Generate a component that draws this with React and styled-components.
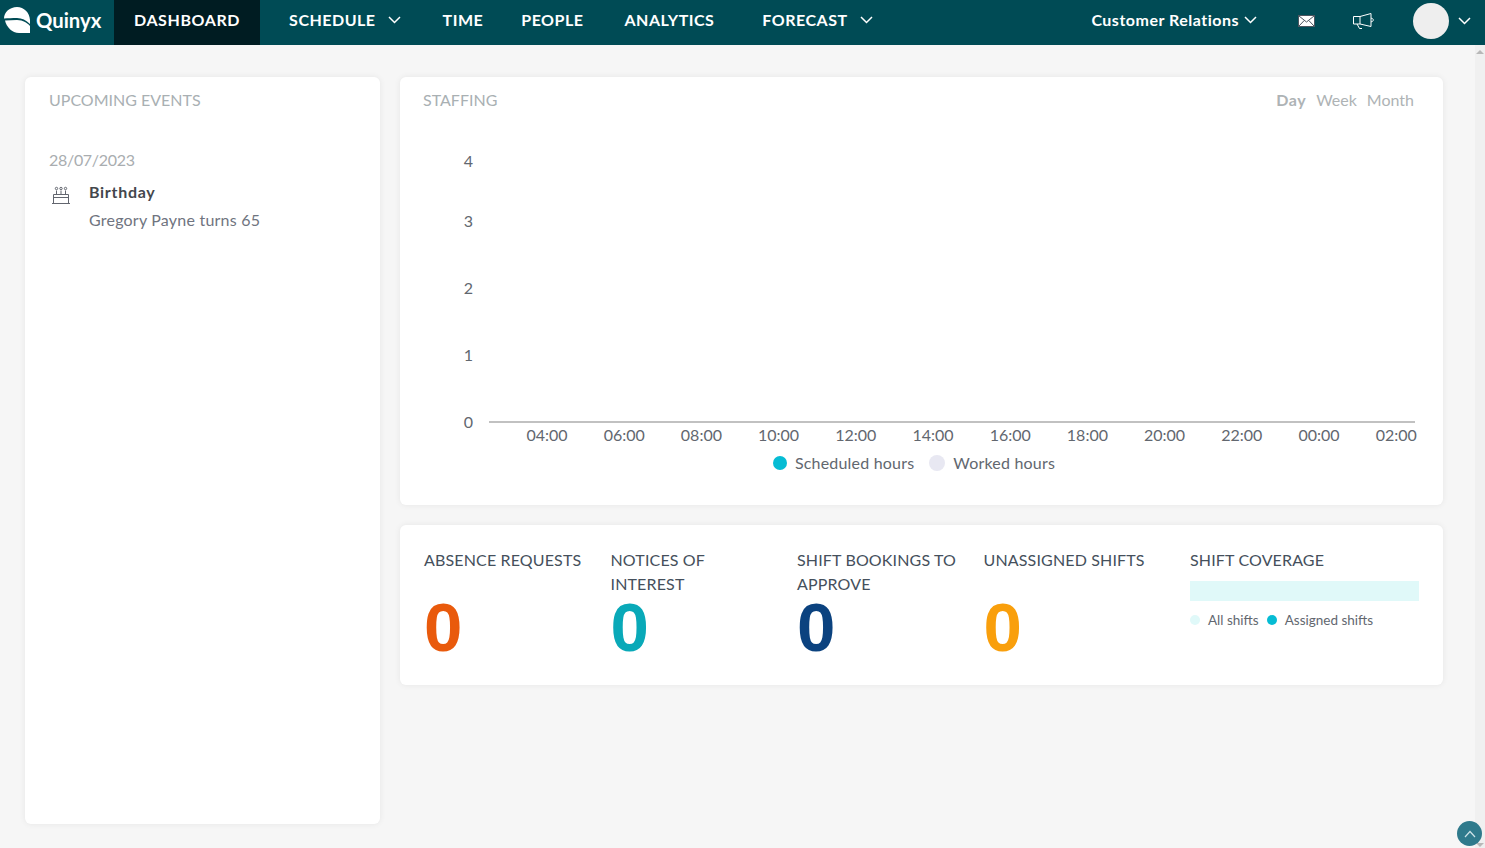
import React from "react";
import styled, { createGlobalStyle } from "styled-components";

const FONT = `Lato, "Noto Sans", "Liberation Sans", sans-serif`;

const GlobalStyle = createGlobalStyle`
  html, body {
    margin: 0;
    height: 100%;
    overflow: hidden;
    background: #f6f6f6;
    font-family: ${FONT};
  }
`;

const Page = styled.div`
  width: 1485px;
  height: 848px;
  display: flex;
  flex-direction: column;
  overflow: hidden;
`;

const TopBar = styled.header`
  height: 45px;
  flex: none;
  display: flex;
  align-items: center;
  background: #004b55;
  color: #fff;
`;

const Brand = styled.div`
  width: 114px;
  flex: none;
  height: 100%;
  display: flex;
  align-items: center;
  gap: 5px;
  padding: 0 0 5px 4px;
  box-sizing: border-box;
  font-size: 20.3px;
  font-weight: 700;
`;

const NavItem = styled.a`
  height: 100%;
  box-sizing: border-box;
  display: flex;
  align-items: center;
  gap: ${(p) => p.$gap || 12}px;
  margin-left: ${(p) => p.$left || 0}px;
  padding: ${(p) => (p.$active ? "0 20px 6px" : "0 0 6px")};
  background: ${(p) => (p.$active ? "#001c22" : "transparent")};
  font-size: 16px;
  font-weight: 700;
  letter-spacing: ${(p) => (p.$active ? "0.6px" : "0.5px")};
  white-space: nowrap;
`;

const Chevron = () => (
  <svg width="13" height="8" viewBox="0 0 13 8" fill="none" stroke="#fff" strokeWidth="1.5">
    <path d="M1 1L6.5 6.5L12 1" />
  </svg>
);

const RightNav = styled.div`
  margin-left: auto;
  height: 100%;
  display: flex;
  align-items: center;
`;

const IconSlot = styled.span`
  display: flex;
  margin: 0 0 3px ${(p) => p.$left}px;
`;

const Avatar = styled.span`
  width: 36px;
  height: 36px;
  border-radius: 50%;
  background: #eeeeee;
  margin: 0 0 3px 39px;
`;

const Body = styled.div`
  flex: 1;
  display: flex;
  min-height: 0;
`;

const Content = styled.main`
  flex: 1;
  display: grid;
  grid-template-columns: 355px 1043px;
  column-gap: 20px;
  align-items: start;
  padding: 32px 0 0 25px;
`;

const Card = styled.section`
  background: #fff;
  border-radius: 6px;
  box-shadow: 0 0 6px rgba(0, 0, 0, 0.07);
  box-sizing: border-box;
`;

const EventsCard = styled(Card)`
  height: 747px;
  padding: 13px 24px;
`;

const Column = styled.div`
  display: flex;
  flex-direction: column;
  gap: 20px;
`;

const CardTitle = styled.h2`
  margin: 0;
  font-size: 16px;
  line-height: 20px;
  font-weight: 400;
  color: #a9b0b3;
`;

const DateLabel = styled.div`
  margin-top: 40px;
  font-size: 16px;
  line-height: 20px;
  letter-spacing: -0.3px;
  color: #a9adb0;
`;

const EventRow = styled.div`
  margin-top: 12px;
  display: flex;
  gap: 19px;
`;

const EventIcon = styled.span`
  width: 21px;
  padding: 4px 0 0 2px;
  box-sizing: border-box;
  display: flex;
  justify-content: center;
  flex: none;
`;

const EventName = styled.div`
  font-size: 16px;
  line-height: 20px;
  font-weight: 700;
  letter-spacing: 0.7px;
  color: #44474d;
`;

const EventText = styled.div`
  margin-top: 8px;
  font-size: 16px;
  line-height: 20px;
  letter-spacing: 0.22px;
  color: #6f7480;
`;

const StaffingCard = styled(Card)`
  height: 428px;
  padding: 13px 29px 0 23px;
`;

const CardHead = styled.div`
  display: flex;
  justify-content: space-between;
`;

const RangeTabs = styled.div`
  display: flex;
  gap: 10px;
`;

const RangeTab = styled.span`
  font-size: 16px;
  line-height: 20px;
  color: #aeb3b5;
  font-weight: ${(p) => (p.$active ? 700 : 400)};
  letter-spacing: ${(p) => (p.$active ? "0.5px" : "0")};
`;

const ChartFrame = styled.svg`
  display: block;
  margin: 0 0 0 -23px;
  font-family: ${FONT};
`;

const Legend = styled.div`
  display: flex;
  justify-content: center;
  align-items: center;
  gap: 15px;
  padding-right: 9px;
`;

const LegendEntry = styled.span`
  display: flex;
  align-items: center;
  gap: ${(p) => p.$gap || 8}px;
  font-size: ${(p) => p.$size || 16}px;
  line-height: 20px;
  letter-spacing: ${(p) => (p.$size ? 0 : "0.2px")};
  color: #62676f;
`;

const Dot = styled.i`
  width: ${(p) => p.$size}px;
  height: ${(p) => p.$size}px;
  border-radius: 50%;
  background: ${(p) => p.$color};
`;

const StatsCard = styled(Card)`
  height: 160px;
  padding: 23px 24px 0;
  display: grid;
  grid-template-columns: 186.5px 186.5px 186.5px 206.5px 1fr;
`;

const StatTitle = styled.div`
  height: ${(p) => (p.$short ? 25 : 50)}px;
  font-size: 16px;
  line-height: 24px;
  letter-spacing: 0.15px;
  color: #45505c;
  padding-right: 22px;
`;

const StatValue = styled.div`
  font-family: "Liberation Sans", Arial, sans-serif;
  font-size: 69px;
  line-height: 60px;
  font-weight: 700;
  color: ${(p) => p.$color};
`;

const CoverageBar = styled.div`
  height: 20px;
  margin-top: 8px;
  background: #e0f9f9;
`;

const CoverageLegend = styled.div`
  margin-top: 9px;
  display: flex;
  gap: 8px;
`;

const Track = styled.div`
  width: 10px;
  flex: none;
  background: #f0f0f0;
  display: flex;
  flex-direction: column;
  align-items: center;
  justify-content: space-between;
  padding: 5px 0 1px;
  box-sizing: border-box;
`;

const TrackArrow = styled.span`
  width: 0;
  height: 0;
  border-left: 4px solid transparent;
  border-right: 4px solid transparent;
  border-top: ${(p) => (p.$down ? "4px solid #b8b8b8" : "0")};
  border-bottom: ${(p) => (p.$down ? "0" : "4px solid #b8b8b8")};
`;

const ScrollTop = styled.button`
  position: fixed;
  right: 3px;
  bottom: 2px;
  width: 25px;
  height: 25px;
  padding: 0;
  border: 0;
  border-radius: 50%;
  background: #2f7a8c;
  display: flex;
  align-items: center;
  justify-content: center;
`;

const Logo = () => (
  <svg width="27" height="27" viewBox="0 0 27 27" fill="#fff">
    <path d="M0 11.5C0 5 6 0 13 0C20 0 25.5 5.5 26 13L26 17C22 13 18 11 13 11C8 11 4 11.2 0 11.5Z" />
    <path d="M1 13.5C5 13.2 9 13 13 13C19 13 24 16.5 26 19L26 26L15 26C8 26 2.5 20 1 13.5Z" />
  </svg>
);

const MailIcon = () => (
  <svg width="17" height="12" viewBox="0 0 17 12">
    <rect x="0.5" y="0.5" width="16" height="11" fill="#fff" stroke="#4c5660" />
    <path d="M1 1L8.5 7L16 1M1 11L6.2 5.5M16 11L10.8 5.5" fill="none" stroke="#4c5660" />
  </svg>
);

const MegaphoneIcon = () => (
  <svg width="21" height="17" viewBox="0 0 21 17" fill="none" stroke="#fff" strokeWidth="1">
    <path d="M7 3.5H0.5V11H7Z" />
    <path d="M7 3.5L18 0.5V13.5L7 11" />
    <path d="M18 5.2C19.3 5.2 20.3 6 20.3 7C20.3 8 19.3 8.8 18 8.8" />
    <path d="M4 11L6.5 15.5H9" />
  </svg>
);

const CakeIcon = () => (
  <svg width="18" height="18" viewBox="0 0 18 18" fill="none" stroke="#62666f" strokeWidth="1">
    <path d="M0 17.5H18M1.5 17.5V8.5H16.5V17.5M1.5 11.5H16.5" />
    <path d="M4.5 8.5V4.5M9 8.5V4.5M13.5 8.5V4.5" />
    <circle cx="4.5" cy="2.5" r="1.2" />
    <circle cx="9" cy="2.5" r="1.2" />
    <circle cx="13.5" cy="2.5" r="1.2" />
  </svg>
);

const yTicks = [
  ["4", 51],
  ["3", 111],
  ["2", 178],
  ["1", 245],
  ["0", 312],
];

const xTicks = ["04:00", "06:00", "08:00", "10:00", "12:00", "14:00", "16:00", "18:00", "20:00", "22:00", "00:00", "02:00"];

const StaffingChart = () => (
  <ChartFrame width="1020" height="343" viewBox="0 0 1020 343">
    {yTicks.map(([label, y]) => (
      <text key={label} x="73" y={y + 6} textAnchor="end" fontSize="16" fill="#62676f">
        {label}
      </text>
    ))}
    <line x1="89" x2="1015" y1="312" y2="312" stroke="#acacac" strokeWidth="1.5" />
    {xTicks.map((label, i) => (
      <text key={label} x={147 + i * 77.2} y="331" textAnchor="middle" fontSize="16" fill="#62676f">
        {label}
      </text>
    ))}
  </ChartFrame>
);

const stats = [
  { title: "ABSENCE REQUESTS", color: "#e95a0c" },
  { title: "NOTICES OF INTEREST", color: "#09a9b8" },
  { title: "SHIFT BOOKINGS TO APPROVE", color: "#0b427f" },
  { title: "UNASSIGNED SHIFTS", color: "#f99f0c" },
];

export default function App() {
  return (
    <Page>
      <GlobalStyle />
      <TopBar>
        <Brand>
          <Logo />
          Quinyx
        </Brand>
        <NavItem $active>DASHBOARD</NavItem>
        <NavItem $left={29}>
          SCHEDULE <Chevron />
        </NavItem>
        <NavItem $left={42}>TIME</NavItem>
        <NavItem $left={38}>PEOPLE</NavItem>
        <NavItem $left={41}>ANALYTICS</NavItem>
        <NavItem $left={48}>
          FORECAST <Chevron />
        </NavItem>
        <RightNav>
          <NavItem $gap={5}>
            Customer Relations <Chevron />
          </NavItem>
          <IconSlot $left={41}>
            <MailIcon />
          </IconSlot>
          <IconSlot $left={38}>
            <MegaphoneIcon />
          </IconSlot>
          <Avatar />
          <IconSlot $left={9}>
            <Chevron />
          </IconSlot>
          <IconSlot $left={14} />
        </RightNav>
      </TopBar>
      <Body>
        <Content>
          <EventsCard>
            <CardTitle>UPCOMING EVENTS</CardTitle>
            <DateLabel>28/07/2023</DateLabel>
            <EventRow>
              <EventIcon>
                <CakeIcon />
              </EventIcon>
              <div>
                <EventName>Birthday</EventName>
                <EventText>Gregory Payne turns 65</EventText>
              </div>
            </EventRow>
          </EventsCard>
          <Column>
            <StaffingCard>
              <CardHead>
                <CardTitle>STAFFING</CardTitle>
                <RangeTabs>
                  <RangeTab $active>Day</RangeTab>
                  <RangeTab>Week</RangeTab>
                  <RangeTab>Month</RangeTab>
                </RangeTabs>
              </CardHead>
              <StaffingChart />
              <Legend>
                <LegendEntry>
                  <Dot $size={14} $color="#06bcd4" />
                  Scheduled hours
                </LegendEntry>
                <LegendEntry>
                  <Dot $size={16} $color="#e8e8f2" />
                  Worked hours
                </LegendEntry>
              </Legend>
            </StaffingCard>
            <StatsCard>
              {stats.map((s) => (
                <div key={s.title}>
                  <StatTitle>{s.title}</StatTitle>
                  <StatValue $color={s.color}>0</StatValue>
                </div>
              ))}
              <div>
                <StatTitle $short>SHIFT COVERAGE</StatTitle>
                <CoverageBar />
                <CoverageLegend>
                  <LegendEntry $size={13.5} $gap={8}>
                    <Dot $size={10} $color="#e0f9f9" />
                    All shifts
                  </LegendEntry>
                  <LegendEntry $size={13.5} $gap={8}>
                    <Dot $size={10} $color="#06bcd4" />
                    Assigned shifts
                  </LegendEntry>
                </CoverageLegend>
              </div>
            </StatsCard>
          </Column>
        </Content>
        <Track>
          <TrackArrow />
          <TrackArrow $down />
        </Track>
      </Body>
      <ScrollTop aria-label="Back to top">
        <svg width="12" height="8" viewBox="0 0 12 8" fill="none" stroke="#cfe3e8" strokeWidth="1.2">
          <path d="M1 7L6 1.5L11 7" />
        </svg>
      </ScrollTop>
    </Page>
  );
}
